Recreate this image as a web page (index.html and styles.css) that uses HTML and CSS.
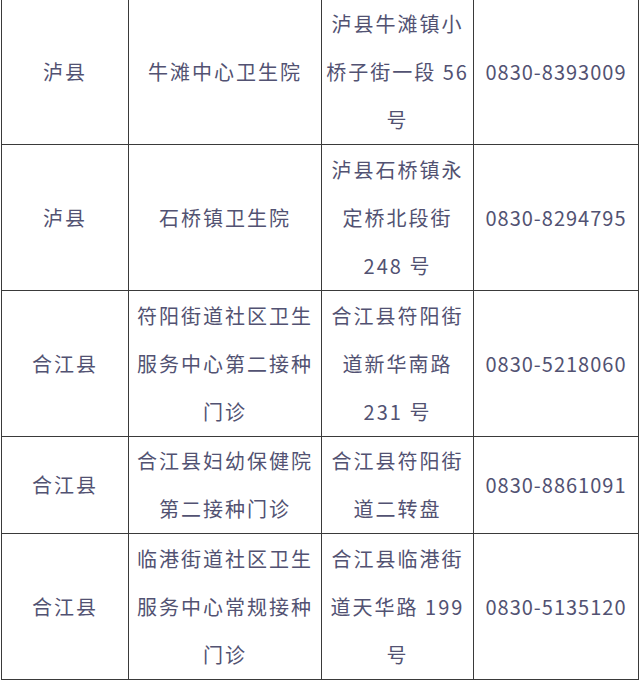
FILE: index.html
```html
<!DOCTYPE html>
<html lang="zh-CN">
<head>
<meta charset="utf-8">
<title>接种门诊</title>
<link rel="stylesheet" href="styles.css">
</head>
<body>
<table class="clinics">
  <colgroup>
    <col class="c-county">
    <col class="c-name">
    <col class="c-addr">
    <col class="c-phone">
  </colgroup>
  <tbody>
    <tr class="r3">
      <td>泸县</td>
      <td>牛滩中心卫生院</td>
      <td>泸县牛滩镇小<br>桥子街一段 56<br>号</td>
      <td class="phone">0830-8393009</td>
    </tr>
    <tr class="r3">
      <td>泸县</td>
      <td>石桥镇卫生院</td>
      <td>泸县石桥镇永<br>定桥北段街<br>248 号</td>
      <td class="phone">0830-8294795</td>
    </tr>
    <tr class="r3">
      <td>合江县</td>
      <td>符阳街道社区卫生<br>服务中心第二接种<br>门诊</td>
      <td>合江县符阳街<br>道新华南路<br>231 号</td>
      <td class="phone">0830-5218060</td>
    </tr>
    <tr class="r2">
      <td>合江县</td>
      <td>合江县妇幼保健院<br>第二接种门诊</td>
      <td>合江县符阳街<br>道二转盘</td>
      <td class="phone">0830-8861091</td>
    </tr>
    <tr class="r3">
      <td>合江县</td>
      <td>临港街道社区卫生<br>服务中心常规接种<br>门诊</td>
      <td>合江县临港街<br>道天华路 199<br>号</td>
      <td class="phone">0830-5135120</td>
    </tr>
  </tbody>
</table>
</body>
</html>
```
FILE: styles.css
```css
html, body {
  margin: 0;
  padding: 0;
  background: #ffffff;
}

.clinics {
  margin: -2px 0 0 1px;
  width: 637px;
  border-collapse: collapse;
  table-layout: fixed;
  font-family: "Noto Sans CJK SC", "Noto Sans", sans-serif;
  font-size: 20px;
  line-height: 48px;
  letter-spacing: 2px;
  color: #525272;
}

.c-county { width: 127px; }
.c-name { width: 193px; }
.c-addr { width: 152px; }
.c-phone { width: 165px; }

.clinics td {
  border: 1px solid #3a3a3a;
  padding: 0 2px;
  text-align: center;
  vertical-align: middle;
  white-space: nowrap;
}

.clinics .r3 td { height: 145px; }
.clinics .r2 td { height: 95px; }

.clinics .phone {
  letter-spacing: 1px;
}
```
